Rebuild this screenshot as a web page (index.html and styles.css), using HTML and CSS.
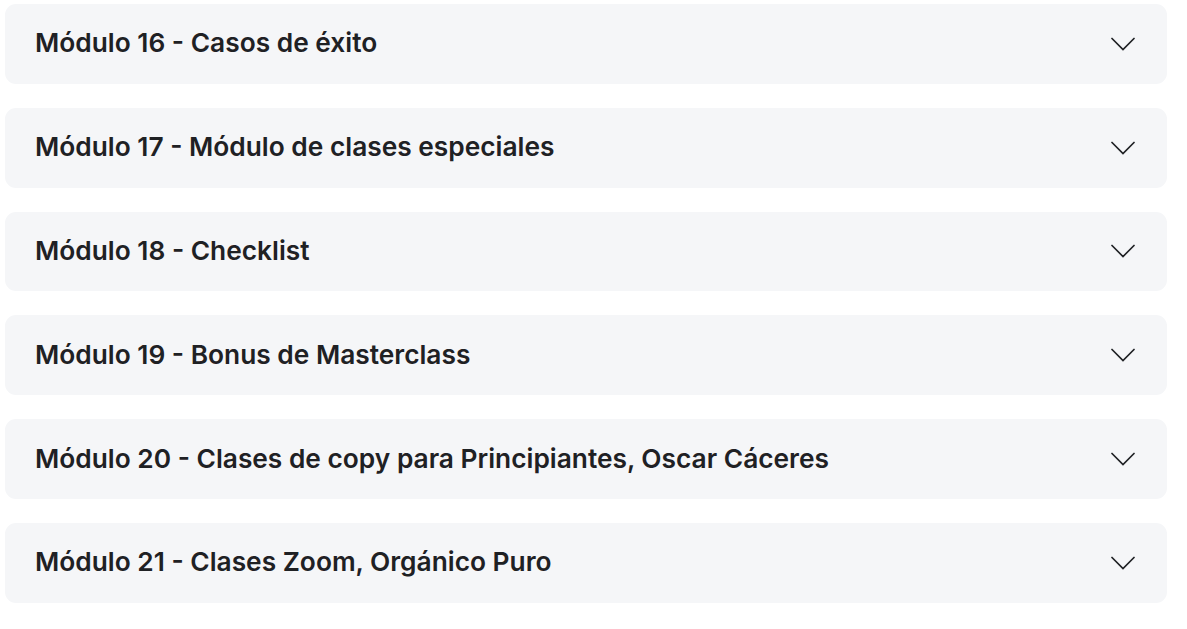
FILE: index.html
```html
<!DOCTYPE html>
<html lang="es">
<head>
<meta charset="utf-8">
<link rel="stylesheet" href="styles.css">
</head>
<body>
<div class="list">
  <div class="item"><span class="title">Módulo 16 - Casos de éxito</span><svg class="chev" viewBox="0 0 24 14"><path d="M1 1.5 L12 12.5 L23 1.5"/></svg></div>
  <div class="item"><span class="title">Módulo 17 - Módulo de clases especiales</span><svg class="chev" viewBox="0 0 24 14"><path d="M1 1.5 L12 12.5 L23 1.5"/></svg></div>
  <div class="item"><span class="title">Módulo 18 - Checklist</span><svg class="chev" viewBox="0 0 24 14"><path d="M1 1.5 L12 12.5 L23 1.5"/></svg></div>
  <div class="item"><span class="title">Módulo 19 - Bonus de Masterclass</span><svg class="chev" viewBox="0 0 24 14"><path d="M1 1.5 L12 12.5 L23 1.5"/></svg></div>
  <div class="item"><span class="title">Módulo 20 - Clases de copy para Principiantes, Oscar Cáceres</span><svg class="chev" viewBox="0 0 24 14"><path d="M1 1.5 L12 12.5 L23 1.5"/></svg></div>
  <div class="item"><span class="title">Módulo 21 - Clases Zoom, Orgánico Puro</span><svg class="chev" viewBox="0 0 24 14"><path d="M1 1.5 L12 12.5 L23 1.5"/></svg></div>
</div>
</body>
</html>
```
FILE: styles.css
```css
html, body {
  margin: 0;
  padding: 0;
  background: #ffffff;
}
.list {
  display: flex;
  flex-direction: column;
  gap: 24px;
  padding: 4px 20px 0 5px;
}
.item {
  display: flex;
  align-items: center;
  justify-content: space-between;
  height: 79.8px;
  box-sizing: border-box;
  padding: 0 32px 0 30px;
  background: #f5f6f8;
  border-radius: 11px;
}
.title {
  font-family: "Inter", "Noto Sans", sans-serif;
  font-weight: 600;
  font-size: 26.3px;
  color: #1f2124;
  position: relative;
  top: -1px;
}
.chev {
  width: 24px;
  height: 14px;
  fill: none;
  stroke: #1f2124;
  stroke-width: 1.7;
  stroke-linecap: round;
  stroke-linejoin: miter;
}
```
